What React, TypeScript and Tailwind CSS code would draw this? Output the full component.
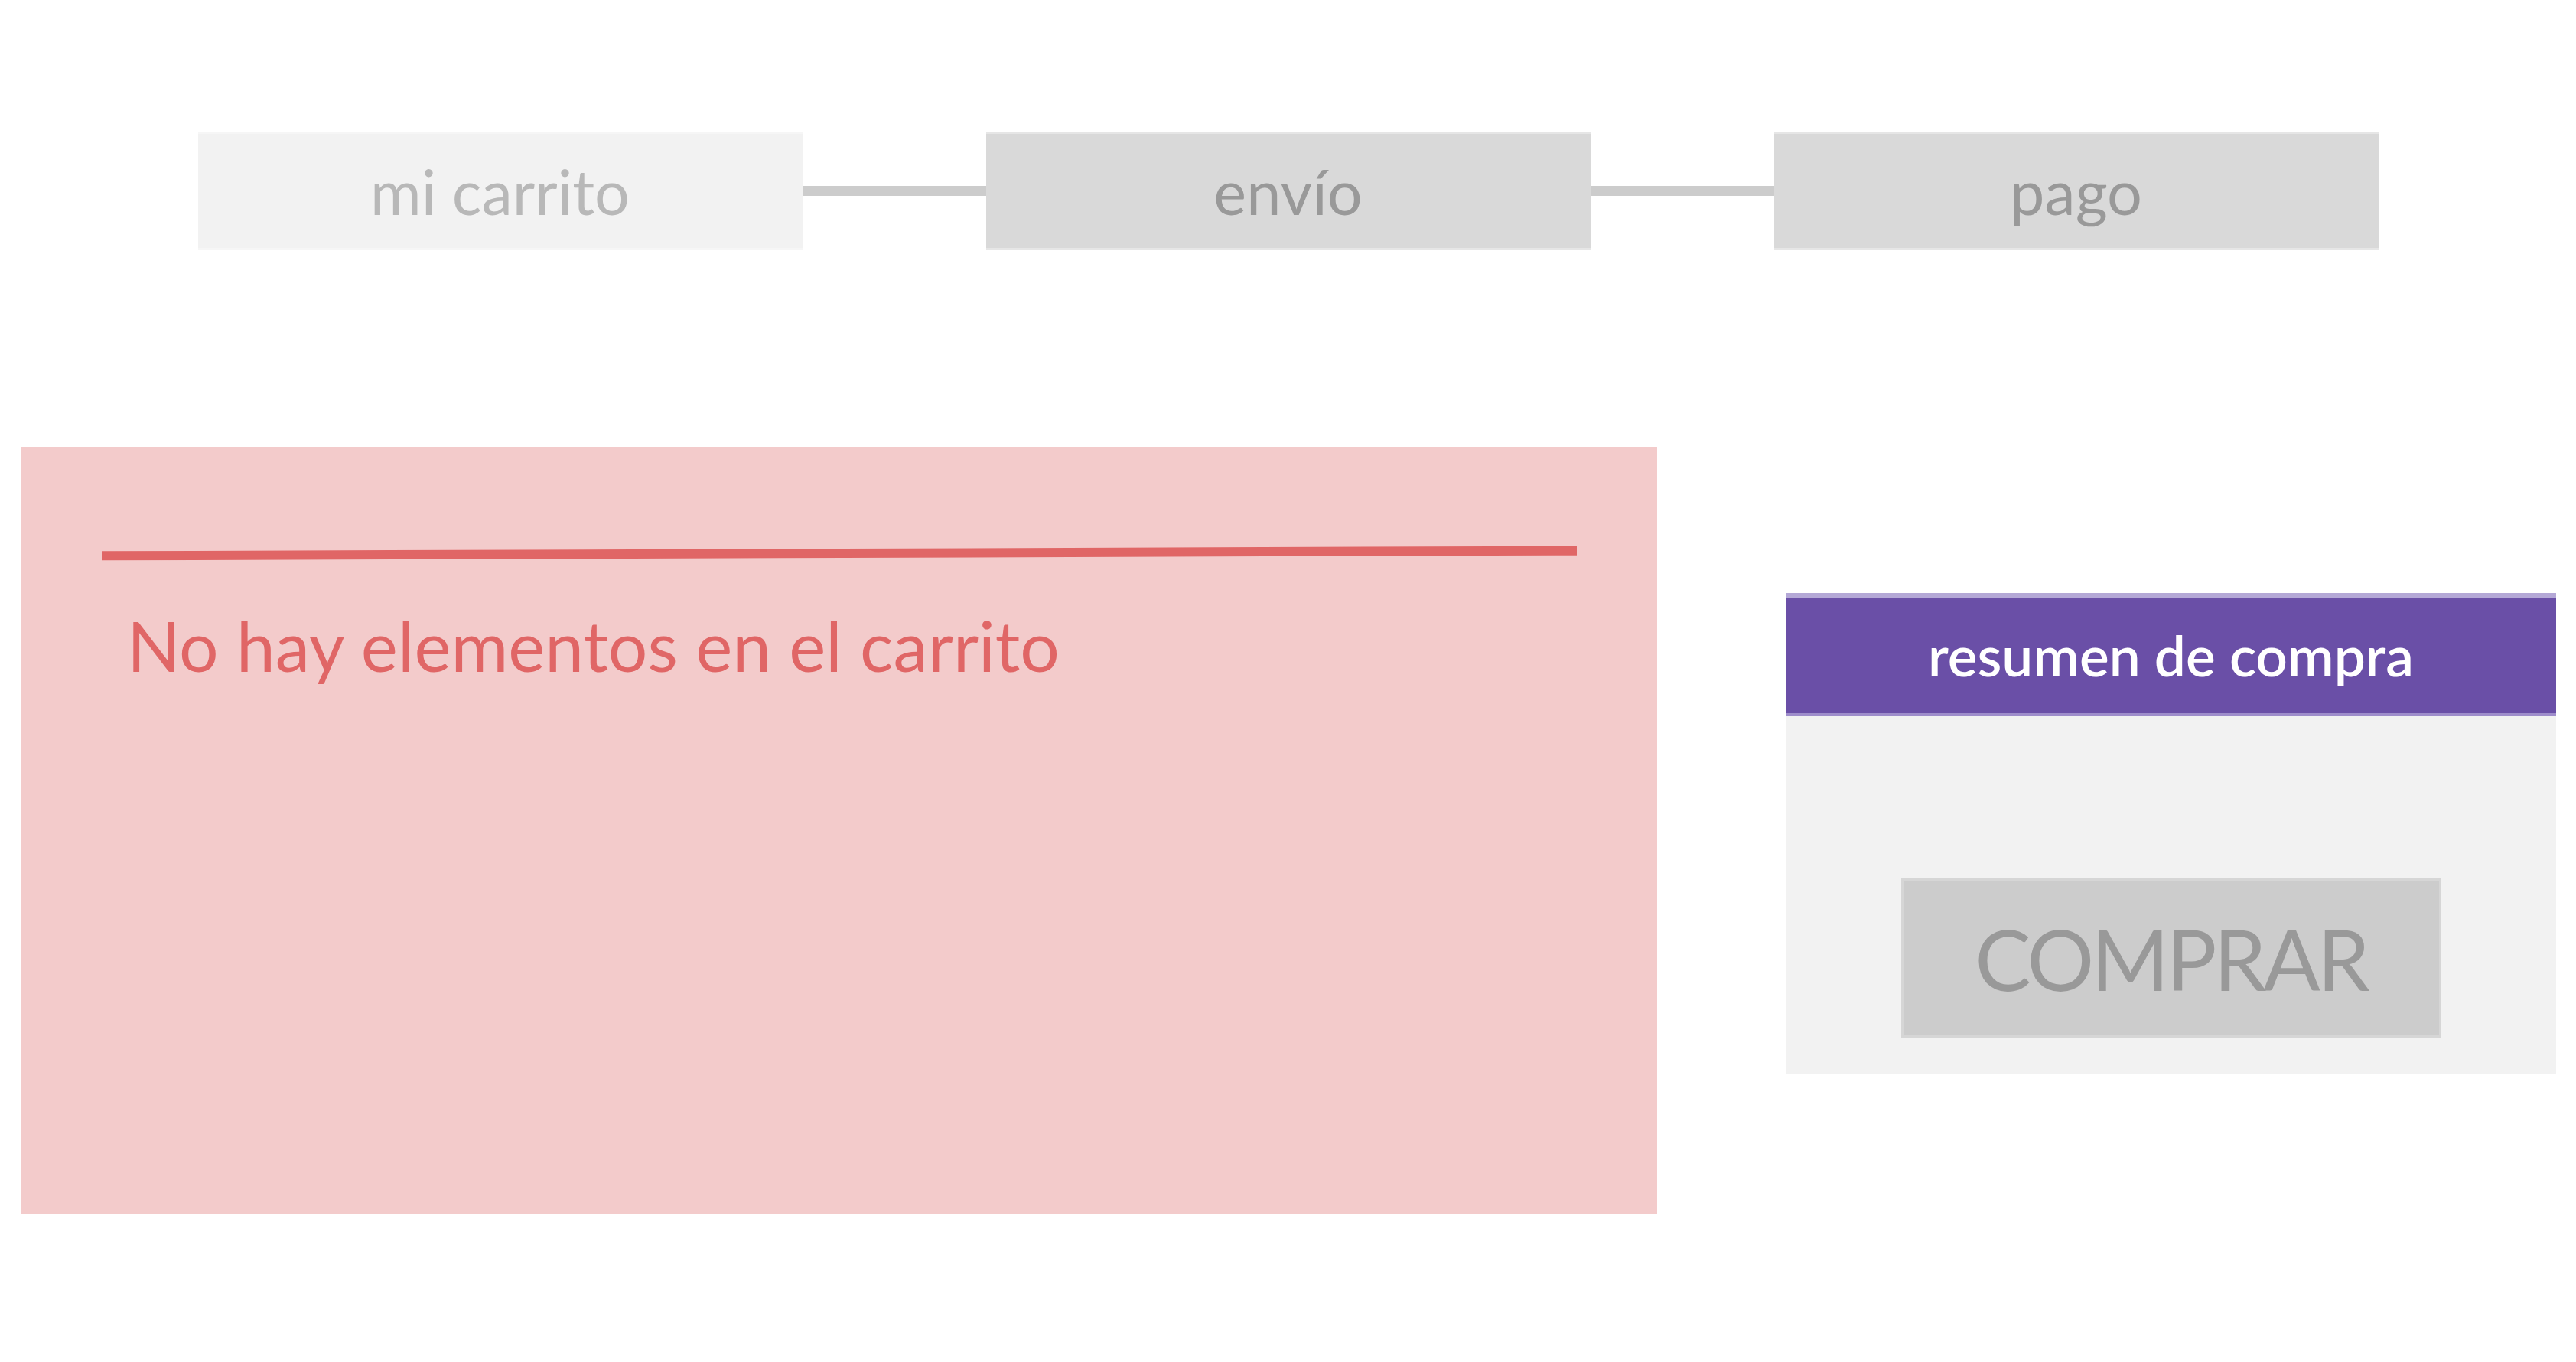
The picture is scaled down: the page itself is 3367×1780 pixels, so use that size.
import React from 'react'

const font = { fontFamily: 'Lato, "Open Sans", sans-serif' }

function Step({ label, active }: { label: string; active?: boolean }) {
  return (
    <div
      className={
        active
          ? "flex h-[155px] w-[790px] items-center justify-center border-y-[3px] border-[#f6f6f6] bg-[#f2f2f2] text-[81px] text-[#b8b8b8]"
          : "flex h-[155px] w-[790px] items-center justify-center border-y-[3px] border-[#e6e6e6] bg-[#d9d9d9] text-[81px] text-[#999999]"
      }
    >
      <span className="leading-none">{label}</span>
    </div>
  )
}

function Connector() {
  return <div className="h-[13px] w-[240px] bg-[#cccccc]" />
}

export default function App() {
  return (
    <div className="min-h-screen w-full bg-white" style={font}>
      {/* checkout steps */}
      <div className="flex items-center justify-center pt-[172px]">
        <Step label="mi carrito" active />
        <Connector />
        <Step label="envío" />
        <Connector />
        <Step label="pago" />
      </div>

      <div className="mt-[257px] flex items-start justify-between pl-[28px] pr-[26px]">
        {/* cart */}
        <div className="h-[1003px] w-[2138px] bg-[#f3cbcb] px-[105px] pt-[133px]">
          <div className="h-[12px] w-full -rotate-[0.2deg] bg-[#e06666]" />
          <p className="mt-[68px] pl-[33px] text-[91px] leading-none text-[#e06666]">
            No hay elementos en el carrito
          </p>
        </div>

        {/* summary */}
        <div className="mt-[191px] w-[1007px] bg-[#f2f2f2]">
          <div className="flex h-[161px] items-center justify-center border-t-[6px] border-b-[4px] border-t-[#b4a8d6] border-b-[#9e8dcb] bg-[#6a4fa7]">
            <span className="text-[73px] font-semibold leading-none text-white">resumen de compra</span>
          </div>
          <div className="flex justify-center pt-[212px] pb-[47px]">
            <button className="flex h-[208px] w-[706px] items-center justify-center border-[3px] border-[#d6d6d6] bg-[#cccccc] text-[110px] leading-none tracking-[-4px] text-[#999999]">
              COMPRAR
            </button>
          </div>
        </div>
      </div>
    </div>
  )
}
